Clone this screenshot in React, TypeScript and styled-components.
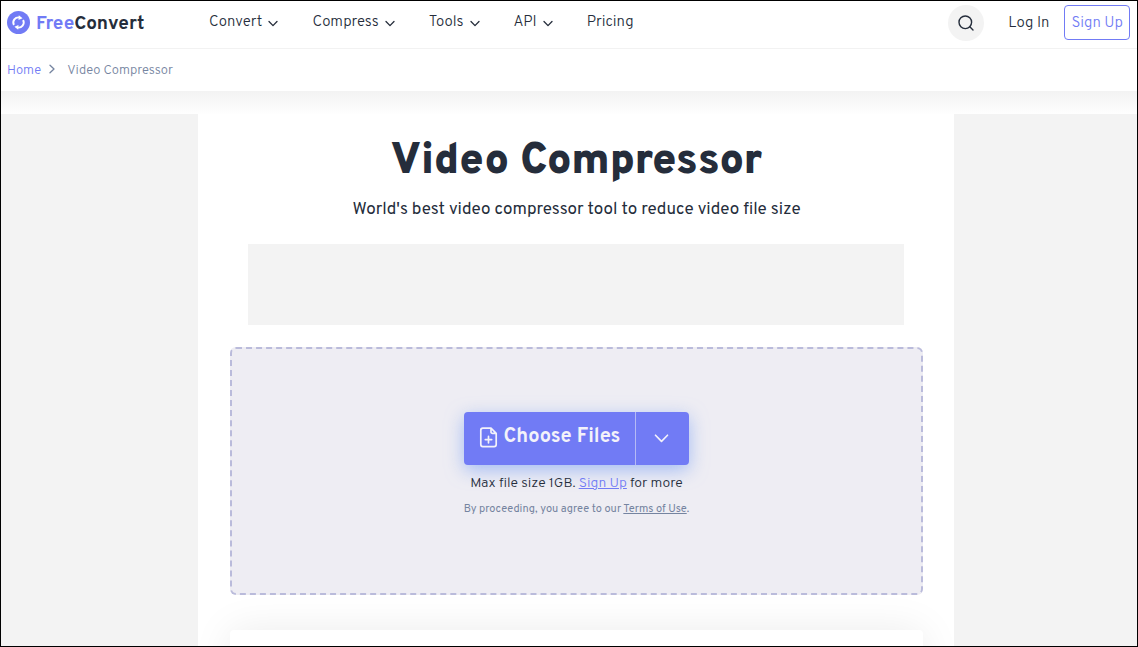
import React from 'react';
import styled, { createGlobalStyle } from 'styled-components';

const ink = '#252d3b';
const violet = '#717bf5';
const slate = '#7584a0';

const GlobalStyle = createGlobalStyle`
  *, *::before, *::after { box-sizing: border-box; }
  body {
    margin: 0;
    background: #fff;
    color: ${ink};
    font-family: Overpass, Roboto, "Liberation Sans", sans-serif;
  }
  button { font: inherit; cursor: pointer; }
`;

const Frame = styled.div`
  height: 100vh;
  display: flex;
  flex-direction: column;
  border: 1px solid #000;
  overflow: hidden;
`;

const Header = styled.header`
  flex: none;
  display: flex;
  align-items: center;
  height: 48px;
  padding: 0 7px 4px 6px;
  border-bottom: 1px solid #f2f2f2;
`;

const Brand = styled.a`
  display: flex;
  align-items: center;
  gap: 6px;
  width: 202px;
  color: ${ink};
  font-size: 19px;
  line-height: 24px;
  font-weight: 700;
  text-decoration: none;
`;

const BrandName = styled.span`
  padding-top: 2px;
`;

const BrandAccent = styled.span`
  color: ${violet};
`;

const Nav = styled.nav`
  display: flex;
  align-items: center;
  gap: 34px;
`;

const NavButton = styled.button`
  display: flex;
  align-items: center;
  gap: 6px;
  padding: 0;
  border: 0;
  background: none;
  color: ${ink};
  font-size: 15px;
  line-height: 20px;
  font-weight: 300;
`;

const NavLink = styled.a`
  color: ${ink};
  font-size: 15px;
  line-height: 20px;
  font-weight: 300;
  text-decoration: none;
`;

const Account = styled.div`
  display: flex;
  align-items: center;
  margin-left: auto;
`;

const SearchButton = styled.button`
  display: flex;
  align-items: center;
  justify-content: center;
  width: 36px;
  height: 36px;
  margin-right: 24px;
  padding: 0;
  border: 0;
  border-radius: 50%;
  background: #f3f3f3;
  color: ${ink};
`;

const LogInLink = styled(NavLink)`
  padding-top: 2px;
`;

const SignUpLink = styled(NavLink)`
  margin-left: 15px;
  padding: 8px 6px 5px;
  border: 1px solid ${violet};
  border-radius: 4px;
  color: ${violet};
`;

const Breadcrumb = styled.nav`
  flex: none;
  display: flex;
  align-items: center;
  height: 42px;
  padding: 2px 6px 0;
  color: ${slate};
  font-size: 13px;
  line-height: 16px;
  font-weight: 300;
`;

const CrumbLink = styled.a`
  color: ${violet};
  text-decoration: none;
`;

const CrumbSeparator = styled.svg`
  margin: 0 11px 4px 7px;
`;

const Shade = styled.div`
  flex: none;
  height: 23px;
  background: linear-gradient(#f3f3f3, #fefefe);
`;

const Columns = styled.div`
  flex: 1;
  min-height: 0;
  display: grid;
  grid-template-columns: 197fr 756fr 183fr;
`;

const AdRail = styled.aside`
  background: #f3f3f3;
`;

const Main = styled.main`
  display: flex;
  flex-direction: column;
  min-height: 0;
  padding: 22px 31px 0 32px;
  overflow: hidden;
  text-align: center;
`;

const Title = styled.h1`
  flex: none;
  margin: 0;
  font-size: 43px;
  line-height: 52px;
  font-weight: 900;
`;

const Subtitle = styled.p`
  flex: none;
  margin: 10px 0 22px;
  font-size: 17px;
  line-height: 24px;
`;

const Banner = styled.div`
  flex: none;
  height: 81px;
  margin: 0 19px 22px 18px;
  background: #f3f3f3;
`;

const DropZone = styled.section`
  flex: none;
  display: flex;
  flex-direction: column;
  align-items: center;
  height: 248px;
  padding-top: 63px;
  border: 2px dashed #babbdb;
  border-radius: 6px;
  background: #eeedf3;
`;

const SplitButton = styled.div`
  display: flex;
  height: 53px;
  border-radius: 4px;
  background: ${violet};
  box-shadow: 0 5px 18px rgba(113, 155, 245, 0.6);
`;

const ChooseButton = styled.button`
  display: flex;
  align-items: center;
  gap: 6px;
  padding: 0 15px 3px;
  border: 0;
  background: none;
  color: #f3f2fa;
  font-size: 20px;
  line-height: 24px;
  font-weight: 700;
`;

const SourceButton = styled.button`
  display: flex;
  align-items: center;
  justify-content: center;
  width: 54px;
  padding: 0 2px 2px 0;
  border: 0;
  border-left: 1px solid #b5baf5;
  background: none;
  color: #f3f2fa;
`;

const Limit = styled.p`
  margin: 9px 0 0;
  font-size: 14px;
  line-height: 20px;
  font-weight: 300;
`;

const Terms = styled.p`
  margin: 7px 0 0;
  color: ${slate};
  font-size: 11px;
  line-height: 16px;
`;

const TextLink = styled.a<{ $tone?: string }>`
  color: ${(p) => p.$tone ?? 'inherit'};
  text-decoration: underline;
`;

const Card = styled.section`
  flex: none;
  height: 120px;
  margin-top: 35px;
  border-radius: 4px;
  background: #fff;
  box-shadow: 0 0 40px rgba(0, 0, 0, 0.08);
`;

function Chevron({ size = 10, stroke = 1.3 }: { size?: number; stroke?: number }) {
  return (
    <svg width={size} height={size} viewBox="0 0 10 10" fill="none" aria-hidden="true">
      <path d="M1 3.5 5 7.6 9 3.5" stroke="currentColor" strokeWidth={stroke} strokeLinecap="round" strokeLinejoin="round" />
    </svg>
  );
}

function Logo() {
  return (
    <svg width="23" height="23" viewBox="0 0 23 23" fill="none" aria-hidden="true">
      <circle cx="11.5" cy="11.5" r="11.5" fill={violet} />
      <path d="M6.9 14A5.2 5.2 0 0 1 12.6 6.5M16.1 9A5.2 5.2 0 0 1 10.4 16.5" stroke="#fff" strokeWidth="1.9" />
      <path d="M11.8 4.3 15.6 7.3 11.5 9.1ZM11.2 18.7 7.4 15.7 11.5 13.9Z" fill="#fff" />
    </svg>
  );
}

function FilePlus() {
  return (
    <svg width="19" height="21" viewBox="0 0 19 21" fill="none" stroke="currentColor" strokeWidth="1.7" strokeLinecap="round" strokeLinejoin="round" aria-hidden="true">
      <path d="M12 1.2H3.8A2 2 0 0 0 1.8 3.2V17.6A2 2 0 0 0 3.8 19.6H15.2A2 2 0 0 0 17.2 17.6V6.4ZM12 1.2V4.9A1.5 1.5 0 0 0 13.5 6.4H17.2M6.3 12.6H12.7M9.5 9.4V15.8" />
    </svg>
  );
}

const menus = ['Convert', 'Compress', 'Tools', 'API'];

export default function App() {
  return (
    <>
      <GlobalStyle />
      <Frame>
        <Header>
          <Brand href="#">
            <Logo />
            <BrandName><BrandAccent>Free</BrandAccent>Convert</BrandName>
          </Brand>
          <Nav aria-label="Main">
            {menus.map((label) => (
              <NavButton key={label} type="button" aria-haspopup="menu">
                {label}
                <Chevron />
              </NavButton>
            ))}
            <NavLink href="#">Pricing</NavLink>
          </Nav>
          <Account>
            <SearchButton type="button" aria-label="Search">
              <svg width="16" height="16" viewBox="0 0 16 16" fill="none" stroke="currentColor" strokeWidth="1.4" strokeLinecap="round" aria-hidden="true">
                <circle cx="7.3" cy="7.3" r="6.3" />
                <path d="m11.8 11.8 3.2 3.2" />
              </svg>
            </SearchButton>
            <LogInLink href="#">Log In</LogInLink>
            <SignUpLink href="#">Sign Up</SignUpLink>
          </Account>
        </Header>
        <Breadcrumb aria-label="Breadcrumb">
          <CrumbLink href="#">Home</CrumbLink>
          <CrumbSeparator width="8" height="10" viewBox="0 0 8 10" fill="none" aria-hidden="true">
            <path d="M2 1.2 6 5 2 8.8" stroke="currentColor" strokeWidth="1.3" strokeLinecap="round" strokeLinejoin="round" />
          </CrumbSeparator>
          <span>Video Compressor</span>
        </Breadcrumb>
        <Shade />
        <Columns>
          <AdRail />
          <Main>
            <Title>Video Compressor</Title>
            <Subtitle>World's best video compressor tool to reduce video file size</Subtitle>
            <Banner />
            <DropZone>
              <SplitButton>
                <ChooseButton type="button">
                  <FilePlus />
                  Choose Files
                </ChooseButton>
                <SourceButton type="button" aria-label="More file sources">
                  <Chevron size={15} stroke={1.1} />
                </SourceButton>
              </SplitButton>
              <Limit>
                Max file size 1GB. <TextLink href="#" $tone={violet}>Sign Up</TextLink> for more
              </Limit>
              <Terms>
                By proceeding, you agree to our <TextLink href="#">Terms of Use</TextLink>.
              </Terms>
            </DropZone>
            <Card />
          </Main>
          <AdRail />
        </Columns>
      </Frame>
    </>
  );
}
